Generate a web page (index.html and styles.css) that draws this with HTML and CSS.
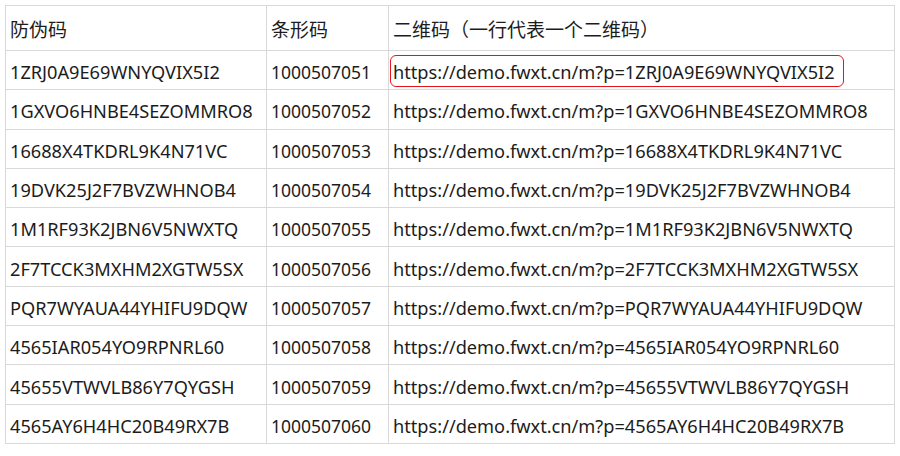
FILE: index.html
```html
<!DOCTYPE html>
<html lang="zh-CN">
<head>
<meta charset="utf-8">
<link rel="stylesheet" href="styles.css">
</head>
<body>
<table class="sheet">
  <colgroup>
    <col class="c1"><col class="c2"><col class="c3">
  </colgroup>
  <tr class="head"><td>防伪码</td><td>条形码</td><td>二维码（一行代表一个二维码）</td></tr>
  <tr><td>1ZRJ0A9E69WNYQVIX5I2</td><td class="num">1000507051</td><td><span class="mark">https://demo.fwxt.cn/m?p=1ZRJ0A9E69WNYQVIX5I2</span></td></tr>
  <tr><td>1GXVO6HNBE4SEZOMMRO8</td><td class="num">1000507052</td><td>https://demo.fwxt.cn/m?p=1GXVO6HNBE4SEZOMMRO8</td></tr>
  <tr><td>16688X4TKDRL9K4N71VC</td><td class="num">1000507053</td><td>https://demo.fwxt.cn/m?p=16688X4TKDRL9K4N71VC</td></tr>
  <tr><td>19DVK25J2F7BVZWHNOB4</td><td class="num">1000507054</td><td>https://demo.fwxt.cn/m?p=19DVK25J2F7BVZWHNOB4</td></tr>
  <tr><td>1M1RF93K2JBN6V5NWXTQ</td><td class="num">1000507055</td><td>https://demo.fwxt.cn/m?p=1M1RF93K2JBN6V5NWXTQ</td></tr>
  <tr><td>2F7TCCK3MXHM2XGTW5SX</td><td class="num">1000507056</td><td>https://demo.fwxt.cn/m?p=2F7TCCK3MXHM2XGTW5SX</td></tr>
  <tr><td>PQR7WYAUA44YHIFU9DQW</td><td class="num">1000507057</td><td>https://demo.fwxt.cn/m?p=PQR7WYAUA44YHIFU9DQW</td></tr>
  <tr><td>4565IAR054YO9RPNRL60</td><td class="num">1000507058</td><td>https://demo.fwxt.cn/m?p=4565IAR054YO9RPNRL60</td></tr>
  <tr><td>45655VTWVLB86Y7QYGSH</td><td class="num">1000507059</td><td>https://demo.fwxt.cn/m?p=45655VTWVLB86Y7QYGSH</td></tr>
  <tr><td>4565AY6H4HC20B49RX7B</td><td class="num">1000507060</td><td>https://demo.fwxt.cn/m?p=4565AY6H4HC20B49RX7B</td></tr>
</table>
</body>
</html>
```
FILE: styles.css
```css
html, body {
  margin: 0;
  padding: 0;
  background: #ffffff;
}
body {
  padding: 5px 0 0 5px;
  font-family: "Noto Sans", "Noto Sans CJK SC", sans-serif;
  font-size: 18.2px;
  color: #1c1c1c;
}
.sheet {
  border-collapse: collapse;
  table-layout: fixed;
  width: 889px;
}
.c1 { width: 261px; }
.c2 { width: 122px; }
.c3 { width: 506px; }
.sheet td {
  border: 1px solid #d9d9d9;
  padding: 4px 0 0 4px;
  height: 34.3px;
  line-height: 22px;
  white-space: nowrap;
  overflow: visible;
  vertical-align: middle;
}
.sheet td.num {
  font-size: 17.5px;
}
.sheet tr.head td {
  height: 42px;
  font-family: "Noto Sans CJK SC", sans-serif;
  font-size: 19px;
  padding-top: 2px;
}
.mark {
  position: relative;
}
.mark::after {
  content: "";
  position: absolute;
  left: -3px;
  right: -9px;
  top: -5px;
  bottom: -3px;
  border: 1.5px solid #e8141c;
  border-radius: 6px;
}
```
